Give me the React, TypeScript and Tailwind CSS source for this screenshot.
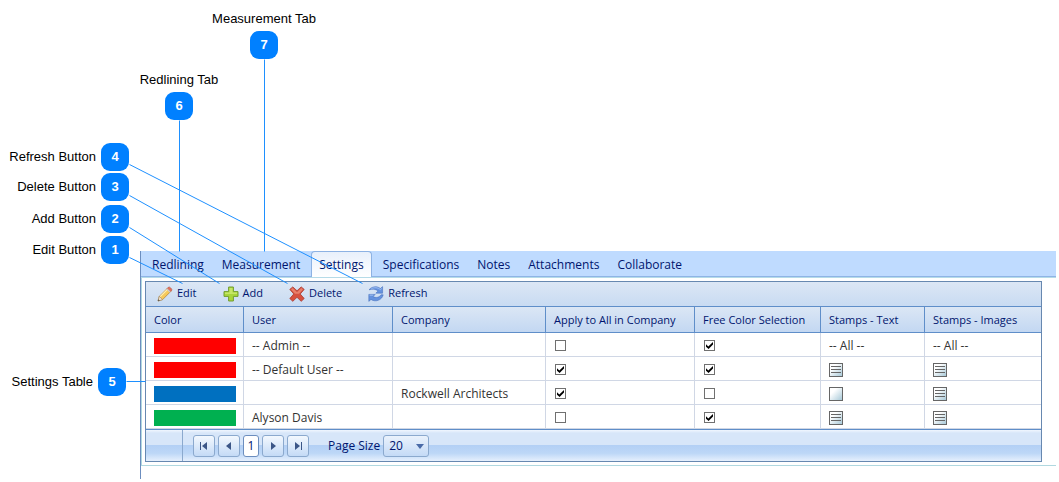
import type { ReactNode } from "react"

const tabs = ["Redlining", "Measurement", "Settings", "Specifications", "Notes", "Attachments", "Collaborate"]

const columns = [
  { label: "Color", width: "w-[98px]" },
  { label: "User", width: "w-[149px]" },
  { label: "Company", width: "w-[153px]" },
  { label: "Apply to All in Company", width: "w-[149px]" },
  { label: "Free Color Selection", width: "w-[126px]" },
  { label: "Stamps - Text", width: "w-[104px]" },
  { label: "Stamps - Images", width: "" },
]

type Stamp = "all" | "list" | "empty"

interface Row {
  color: string
  user: string
  company: string
  applyAll: boolean
  freeColor: boolean
  text: Stamp
  images: Stamp
}

const rows: Row[] = [
  { color: "bg-[#ff0000]", user: "-- Admin --", company: "", applyAll: false, freeColor: true, text: "all", images: "all" },
  { color: "bg-[#ff0000]", user: "-- Default User --", company: "", applyAll: true, freeColor: true, text: "list", images: "list" },
  { color: "bg-[#0070c0]", user: "", company: "Rockwell Architects", applyAll: true, freeColor: false, text: "empty", images: "list" },
  { color: "bg-[#00b050]", user: "Alyson Davis", company: "", applyAll: false, freeColor: true, text: "list", images: "list" },
]

// Side callouts are anchored by the right edge of their badge
const callouts = [
  { id: 1, label: "Edit Button", pos: "right-[calc(100%-129px)] top-[236px]" },
  { id: 2, label: "Add Button", pos: "right-[calc(100%-129px)] top-[205px]" },
  { id: 3, label: "Delete Button", pos: "right-[calc(100%-129px)] top-[173px]" },
  { id: 4, label: "Refresh Button", pos: "right-[calc(100%-129px)] top-[143px]" },
  { id: 5, label: "Settings Table", pos: "right-[calc(100%-126px)] top-[368px]" },
]

const topCallouts = [
  { id: 6, label: "Redlining Tab", pos: "left-[119px] top-[70px]" },
  { id: 7, label: "Measurement Tab", pos: "left-[204px] top-[9px]" },
]

const leaders = [
  [129, 257, 182, 283],
  [129, 227, 219, 283],
  [129, 195, 287, 283],
  [129, 164, 362, 283],
  [126, 381, 145, 381],
  [179, 120, 179, 251],
  [264, 59, 264, 251],
]

function PencilIcon() {
  return (
    <svg width="16" height="16" viewBox="0 0 16 16" aria-hidden="true">
      <path d="M1 15l1.3-4.6L11 1.7l3.3 3.2-8.7 8.7z" fill="#f6c95c" stroke="#b5873a" strokeWidth=".8" />
      <path d="M3.2 10.6l8-8" stroke="#fff0b5" strokeWidth="1.2" />
      <path d="M1 15l1.3-4.6 3.3 3.2z" fill="#f4e6cf" stroke="#9a8468" strokeWidth=".6" />
      <path d="M1 15l.5-1.8 1.3 1.2z" fill="#444" />
      <path d="M10 2.7L11.6 1c.7-.7 3.9 2.2 3.2 3.2l-1.6 1.7z" fill="#e2705c" stroke="#b35e4c" strokeWidth=".6" />
      <path d="M9.4 3.3l.9-.9 3.3 3.2-.9.9z" fill="#c9ccd0" />
    </svg>
  )
}

function PlusIcon() {
  return (
    <svg width="16" height="16" viewBox="0 0 16 16" aria-hidden="true">
      <path d="M5.6 1h4.8v4.6H15v4.8h-4.6V15H5.6v-4.6H1V5.6h4.6z" fill="#a8d63c" stroke="#739d31" strokeLinejoin="round" />
      <path d="M6.5 2h3v4.5H14V8H2V6.5h4.5z" fill="#c6e668" />
    </svg>
  )
}

function CrossIcon() {
  return (
    <svg width="16" height="16" viewBox="0 0 16 16" aria-hidden="true">
      <path
        d="M.8 3.4L3.8.9 8 4.8 12.2.9l3 2.5L11.2 8l4 4.5-3 2.8L8 11.3l-4.2 4-3-2.8L4.8 8z"
        fill="#d6503f"
        stroke="#a93a2e"
        strokeWidth=".8"
        strokeLinejoin="round"
      />
      <path d="M2 3.4L3.7 2 8 6.2 12.3 2 14 3.4l-4 4.4H6z" fill="#e87f6c" />
    </svg>
  )
}

function RefreshIcon() {
  return (
    <svg width="16" height="16" viewBox="0 0 16 16" aria-hidden="true">
      <g fill="#6592de" stroke="#3f68b8" strokeWidth=".5" strokeLinejoin="round">
        <path d="M1 3.8C4 .2 9.2-.2 12.4 2.5L14.6.6v6.6H7.8l2.3-2.3C7.600 3 4.200 2.800 1 3.800z" />
        <path d="M.8 8.400h6.400L5 10.600c2.600 1.500 6.200 1 8-1.800h2.200c-1 5-7.600 8-12.200 4.600L.8 15.400z" />
      </g>
      <path d="M3.200 2.900c3-1.900 6.600-1.500 9.200.7l1.400-1.200M1.600 9.200h3.600" stroke="#a9c6f6" strokeWidth=".8" fill="none" />
    </svg>
  )
}

const actions = [
  { label: "Edit", icon: PencilIcon },
  { label: "Add", icon: PlusIcon },
  { label: "Delete", icon: CrossIcon },
  { label: "Refresh", icon: RefreshIcon },
]

function Check({ checked, label }: { checked: boolean; label: string }) {
  return (
    <span className="relative ml-px block size-[11px]">
      <input
        type="checkbox"
        defaultChecked={checked}
        aria-label={label}
        className="peer block size-[11px] appearance-none border border-[#707070] bg-white"
      />
      <svg className="pointer-events-none absolute inset-0 hidden peer-checked:block" width="11" height="11" viewBox="0 0 11 11">
        <path d="M2 4.2l2.3 2.3L9 2v2.6L4.6 9 2 6.8z" fill="#000" />
      </svg>
    </span>
  )
}

function StampCell({ kind, label }: { kind: Stamp; label: string }) {
  if (kind === "all") return <>-- All --</>
  return (
    <button type="button" aria-label={label} className="block">
      <svg width="14" height="14" viewBox="0 0 14 14">
        <defs>
          <linearGradient id="stamp" x1="0" y1="0" x2="1" y2="1">
            <stop offset=".3" stopColor="#fff" />
            <stop offset="1" stopColor="#a3c6d6" />
          </linearGradient>
        </defs>
        <rect x=".5" y=".5" width="13" height="13" fill="url(#stamp)" stroke="#666" />
        {kind === "list" && <path d="M2 3.5h10M2 6.5h10M2 9.5h10" stroke="#666" />}
      </svg>
    </button>
  )
}

function PagerButton({ label, children }: { label: string; children: ReactNode }) {
  return (
    <button
      type="button"
      aria-label={label}
      className="flex size-[22px] items-center justify-center rounded-[3px] border border-[#8ba9ce] bg-linear-to-b from-[#f3f8fe] to-[#c4daf6]"
    >
      <svg width="8" height="8" viewBox="0 0 8 8" fill="#3b5687">
        {children}
      </svg>
    </button>
  )
}

function Badge({ id }: { id: number }) {
  return (
    <span className="flex size-7 items-center justify-center rounded-[9px] bg-[#0080ff] text-[13px] font-bold text-white">
      {id}
    </span>
  )
}

export default function App() {
  return (
    <div className="relative bg-white pt-[251px] pr-[3px] pb-[3px] pl-[140px] font-['Open_Sans','Noto_Sans',sans-serif] text-[#333]">
      <main className="border-l border-[#6c8ebf] pb-[13px]">
        <nav className="flex h-[27px] items-end border-b border-[#b5dbe8] bg-[#bfdbff] pl-[2px] text-[12px] text-[#00156e] shadow-[inset_0_-1px_0_#8fb4e6]">
          {tabs.map((tab) => (
            <a
              key={tab}
              href={`#${tab.toLowerCase()}`}
              className={
                tab === "Settings"
                  ? "mx-[2px] flex h-[26px] items-center rounded-t-[4px] border border-b-0 border-[#8db2e3] bg-linear-to-b from-[#e8f0fb] to-white px-[7px] pt-px"
                  : "flex h-[26px] items-center px-[9px] pt-[2px]"
              }
            >
              {tab}
            </a>
          ))}
        </nav>

        <div className="border-b border-l border-[#b0d8e0] pt-[3px] pr-[14px] pb-[3px] pl-[3px]">
          <section className="border border-[#6788b0]">
            <div className="flex h-[24px] items-center gap-[26px] bg-linear-to-b from-[#dce7f5] to-[#c8dbf2] pb-px pl-[11px] text-[11px] text-[#00156e]">
              {actions.map(({ label, icon: Icon }) => (
                <button key={label} type="button" className="flex items-center gap-1">
                  <Icon />
                  {label}
                </button>
              ))}
            </div>

            <table className="w-full table-fixed border-separate border-spacing-0 text-left text-[12px]">
              <thead>
                <tr className="h-[27px] bg-linear-to-b from-[#dce7f5] to-[#c2d7f2] text-[11px] text-[#00156e]">
                  {columns.map((col) => (
                    <th
                      key={col.label}
                      className={`${col.width} border-y border-r border-[#5f8ec9] pt-[2px] pr-[7px] pl-2 font-normal whitespace-nowrap last:border-r-0`}
                    >
                      {col.label}
                    </th>
                  ))}
                </tr>
              </thead>
              <tbody>
                {rows.map((row, i) => (
                  <tr
                    key={i}
                    className="h-6 leading-5 *:border-r *:border-b *:border-[#d0d7e5] *:pt-[2px] *:pr-[7px] *:pb-0 *:pl-2 *:last:border-r-0"
                  >
                    <td>
                      <div className={`h-4 ${row.color}`} />
                    </td>
                    <td>{row.user}</td>
                    <td>{row.company}</td>
                    <td>
                      <Check checked={row.applyAll} label="Apply to All in Company" />
                    </td>
                    <td>
                      <Check checked={row.freeColor} label="Free Color Selection" />
                    </td>
                    <td>
                      <StampCell kind={row.text} label="Stamps - Text" />
                    </td>
                    <td>
                      <StampCell kind={row.images} label="Stamps - Images" />
                    </td>
                  </tr>
                ))}
              </tbody>
            </table>

            <footer className="flex h-8 items-stretch border-t border-[#5f8ec9] bg-[linear-gradient(#f0f6fe,#d7e6f9_10%,#d7e6f9_49%,#b3d0f5_50%,#bdd7f7_75%,#e6f0fd)] text-[12px] text-[#00156e]">
              <div className="w-[37px] border-r border-[#8ba9ce]" />
              <div className="flex items-center gap-[3px] pl-[10px]">
                <PagerButton label="First page">
                  <path d="M0 0h1v8H0zM7 0v8L2 4z" />
                </PagerButton>
                <PagerButton label="Previous page">
                  <path d="M6 0v8L1 4z" />
                </PagerButton>
                <button type="button" className="flex h-[22px] w-4 items-center justify-center rounded-[3px] border border-[#6c8ebf] bg-white">
                  1
                </button>
                <PagerButton label="Next page">
                  <path d="M2 0v8l5-4z" />
                </PagerButton>
                <PagerButton label="Last page">
                  <path d="M1 0v8l5-4zM7 0h1v8H7z" />
                </PagerButton>
                <label htmlFor="page-size" className="pl-4">
                  Page Size
                </label>
                <span className="relative">
                  <select
                    id="page-size"
                    defaultValue="20"
                    className="block h-[22px] w-[46px] appearance-none rounded-[3px] border border-[#8ba9ce] bg-linear-to-b from-[#eaf2fc] to-[#c4daf6] pl-[5px]"
                  >
                    <option>10</option>
                    <option>20</option>
                    <option>50</option>
                  </select>
                  <svg className="pointer-events-none absolute top-[9px] right-[5px]" width="8" height="5" viewBox="0 0 8 5" fill="#4a6ba8">
                    <path d="M0 0h8L4 5z" />
                  </svg>
                </span>
              </div>
            </footer>
          </section>
        </div>
      </main>

      <div className="pointer-events-none absolute inset-0 font-['Liberation_Sans',Arial,sans-serif] text-[13px] leading-5 text-black">
        <svg className="absolute inset-0 size-full" fill="none" stroke="#1e90ff">
          {leaders.map(([x1, y1, x2, y2]) => (
            <line key={`${x1}-${y1}`} x1={x1 + 0.5} y1={y1 + 0.5} x2={x2 + 0.5} y2={y2 + 0.5} />
          ))}
        </svg>
        {callouts.map((c) => (
          <div key={c.id} className={`absolute flex items-center gap-[5px] whitespace-nowrap ${c.pos}`}>
            {c.label}
            <Badge id={c.id} />
          </div>
        ))}
        {topCallouts.map((c) => (
          <div key={c.id} className={`absolute flex w-[120px] flex-col items-center gap-[2px] whitespace-nowrap ${c.pos}`}>
            {c.label}
            <Badge id={c.id} />
          </div>
        ))}
      </div>
    </div>
  )
}
